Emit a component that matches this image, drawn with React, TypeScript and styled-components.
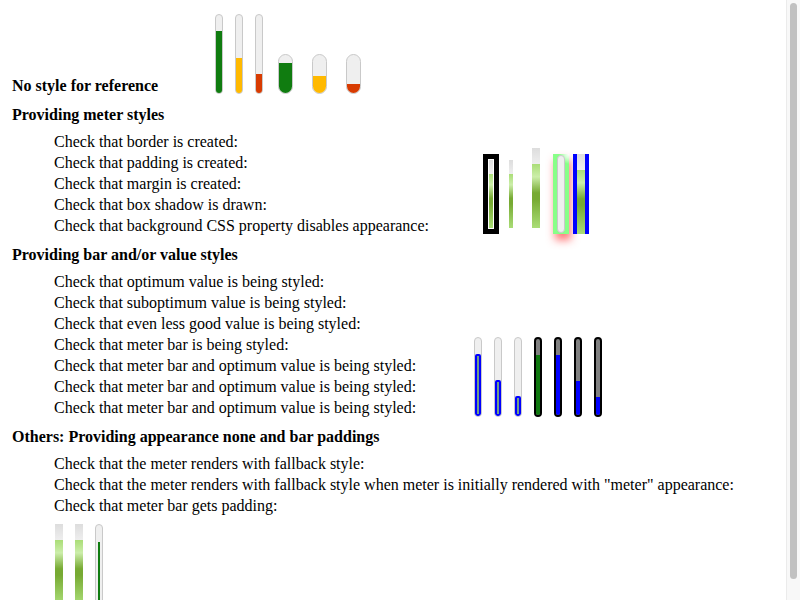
import styled, { createGlobalStyle } from 'styled-components';

const GlobalStyle = createGlobalStyle`
  body {
    margin: 8px;
    background: #fff;
    color: #000;
    font-family: "Liberation Serif", "Times New Roman", serif;
    font-size: 16px;
  }
`;

const Page = styled.div`
  padding: 6px 0 0 4px;
`;

const Section = styled.section`
  margin-bottom: 8px;
`;

const Heading = styled.div<{ $mb?: number }>`
  box-sizing: border-box;
  font-weight: bold;
  height: 21px;
  padding-top: 2px;
  line-height: 19px;
  margin-bottom: ${(p) => p.$mb ?? 6}px;
  white-space: nowrap;
`;

const Row = styled.div<{ $label: number; $indent?: number; $mb?: number }>`
  display: grid;
  grid-template-columns: ${(p) => p.$label}px auto;
  align-items: end;
  margin-left: ${(p) => p.$indent ?? 0}px;
  margin-bottom: ${(p) => p.$mb ?? 0}px;
`;

const Lines = styled.div<{ $indent?: number }>`
  display: flex;
  flex-direction: column;
  margin-left: ${(p) => p.$indent ?? 0}px;
`;

const Line = styled.div`
  box-sizing: border-box;
  height: 21px;
  padding-top: 2px;
  line-height: 19px;
  white-space: nowrap;
`;

const MeterGroup = styled.div<{ $gap: number; $mb?: number; $mt?: number; $ml?: number }>`
  display: flex;
  align-items: flex-end;
  gap: ${(p) => p.$gap}px;
  margin-bottom: ${(p) => p.$mb ?? 0}px;
  margin-top: ${(p) => p.$mt ?? 0}px;
  margin-left: ${(p) => p.$ml ?? 0}px;
`;

/* native looking meter: light capsule with a flat fill */
const Capsule = styled.div<{ $w: number; $h: number; $pad?: string; $ml?: number }>`
  box-sizing: border-box;
  width: ${(p) => p.$w}px;
  height: ${(p) => p.$h}px;
  margin-left: ${(p) => p.$ml ?? 0}px;
  padding: ${(p) => p.$pad ?? '0'};
  background: #efefef;
  border: 1px solid #c9c9c9;
  border-radius: ${(p) => p.$w / 2}px;
  overflow: hidden;
  display: flex;
  flex-direction: column;
  justify-content: flex-end;
  align-items: stretch;
  flex-shrink: 0;
`;

const Fill = styled.div<{ $color: string }>`
  background: ${(p) => p.$color};
`;

/* fallback meter: old gradient bar */
const GradientBar = styled.div<{ $w: number; $h: number; $ml?: number; $mb?: number }>`
  width: ${(p) => p.$w}px;
  height: ${(p) => p.$h}px;
  margin-left: ${(p) => p.$ml ?? 0}px;
  margin-bottom: ${(p) => p.$mb ?? 0}px;
  background: linear-gradient(#ddd, #eee 20%, #ccc 45%, #ccc 55%, #ddd);
  display: flex;
  flex-direction: column;
  justify-content: flex-end;
  flex-shrink: 0;
`;

const GradientValue = styled.div`
  background: linear-gradient(#ad7, #cea 20%, #7a3 45%, #7a3 55%, #ad7);
`;

const BorderBox = styled.div<{ $ml?: number }>`
  border: 5px solid #000;
  padding: 1px;
  margin-left: ${(p) => p.$ml ?? 0}px;
  display: flex;
`;

const PadBox = styled.div<{ $ml?: number }>`
  padding: 6px;
  margin-left: ${(p) => p.$ml ?? 0}px;
  display: flex;
`;

const ShadowBox = styled.div<{ $ml?: number }>`
  box-sizing: border-box;
  width: 16px;
  height: 80px;
  margin-left: ${(p) => p.$ml ?? 0}px;
  padding: 1px 4px;
  background: radial-gradient(circle at 100% 0, #fff 0, #d8ffd8 4px, #8f8 10px);
  box-shadow: 2px 6px 8px rgba(255, 60, 60, 0.7);
  display: flex;
`;

const SideBox = styled.div<{ $ml?: number }>`
  border-left: 4px solid #00f;
  border-right: 4px solid #00f;
  margin-left: ${(p) => p.$ml ?? 0}px;
  display: flex;
`;

const ValueBox = styled.div`
  box-sizing: border-box;
  border: 2px solid #00f;
  border-radius: 2px;
  background: #6e9c8c;
`;

const DarkMeter = styled.div`
  box-sizing: border-box;
  width: 8px;
  height: 80px;
  border: 2px solid #000;
  border-radius: 4px;
  background: #808080;
  overflow: hidden;
  display: flex;
  flex-direction: column;
  justify-content: flex-end;
`;

/* the page overflows the window; the browser's scrollbar is in the shot */
const ScrollTrack = styled.div`
  position: fixed;
  top: 0;
  right: 0;
  bottom: 0;
  width: 14px;
  background: #f8f8f8;
  border-left: 1px solid #ebebeb;
  padding: 3px 3px;
  box-sizing: border-box;
  display: flex;
`;

const ScrollThumb = styled.div`
  width: 8px;
  height: 576px;
  border-radius: 4px;
  background: #c1c1c1;
`;

const GREEN = '#107c10';
const YELLOW = '#ffb900';
const RED = '#d83b01';

const pct = (v: number) => ({ height: `${v * 100}%` });

export default function App() {
  return (
    <>
      <GlobalStyle />
      <Page>
        <Row $label={203} $mb={8}>
          <Heading $mb={0}>No style for reference</Heading>
          <MeterGroup $gap={12} $mb={1}>
            <Capsule $w={8} $h={80}><Fill $color={GREEN} style={pct(0.8)} /></Capsule>
            <Capsule $w={8} $h={80}><Fill $color={YELLOW} style={pct(0.45)} /></Capsule>
            <Capsule $w={8} $h={80}><Fill $color={RED} style={pct(0.25)} /></Capsule>
            <Capsule $w={15} $h={40} $ml={3}><Fill $color={GREEN} style={pct(0.79)} /></Capsule>
            <Capsule $w={15} $h={40} $ml={7}><Fill $color={YELLOW} style={pct(0.45)} /></Capsule>
            <Capsule $w={15} $h={40} $ml={7}><Fill $color={RED} style={pct(0.24)} /></Capsule>
          </MeterGroup>
        </Row>

        <Section>
          <Heading>Providing meter styles</Heading>
          <Row $label={429} $indent={42}>
            <Lines>
              <Line>Check that border is created:</Line>
              <Line>Check that padding is created:</Line>
              <Line>Check that margin is created:</Line>
              <Line>Check that box shadow is drawn:</Line>
              <Line>Check that background CSS property disables appearance:</Line>
            </Lines>
            <MeterGroup $gap={0} $mb={1}>
              <BorderBox>
                <GradientBar $w={4} $h={68}><GradientValue style={pct(0.8)} /></GradientBar>
              </BorderBox>
              <PadBox $ml={4}>
                <GradientBar $w={4} $h={68}><GradientValue style={pct(0.8)} /></GradientBar>
              </PadBox>
              <GradientBar $w={8} $h={80} $ml={13} $mb={6}><GradientValue style={pct(0.8)} /></GradientBar>
              <ShadowBox $ml={13}>
                <Capsule $w={8} $h={78} />
              </ShadowBox>
              <SideBox $ml={4}>
                <GradientBar $w={8} $h={80}><GradientValue style={pct(0.8)} /></GradientBar>
              </SideBox>
            </MeterGroup>
          </Row>
        </Section>

        <Section>
          <Heading>Providing bar and/or value styles</Heading>
          <Row $label={420} $indent={42}>
            <Lines>
              <Line>Check that optimum value is being styled:</Line>
              <Line>Check that suboptimum value is being styled:</Line>
              <Line>Check that even less good value is being styled:</Line>
              <Line>Check that meter bar is being styled:</Line>
              <Line>Check that meter bar and optimum value is being styled:</Line>
              <Line>Check that meter bar and optimum value is being styled:</Line>
              <Line>Check that meter bar and optimum value is being styled:</Line>
            </Lines>
            <MeterGroup $gap={12}>
              <Capsule $w={8} $h={80}><ValueBox style={pct(0.8)} /></Capsule>
              <Capsule $w={8} $h={80}><ValueBox style={pct(0.46)} /></Capsule>
              <Capsule $w={8} $h={80}><ValueBox style={pct(0.26)} /></Capsule>
              <DarkMeter><Fill $color="#0f780f" style={pct(0.79)} /></DarkMeter>
              <DarkMeter><Fill $color="#00f" style={pct(0.79)} /></DarkMeter>
              <DarkMeter><Fill $color="#00f" style={pct(0.45)} /></DarkMeter>
              <DarkMeter><Fill $color="#00f" style={pct(0.24)} /></DarkMeter>
            </MeterGroup>
          </Row>
        </Section>

        <Section>
          <Heading>Others: Providing appearance none and bar paddings</Heading>
          <Lines $indent={42}>
            <Line>Check that the meter renders with fallback style:</Line>
            <Line>Check that the meter renders with fallback style when meter is initially rendered with "meter" appearance:</Line>
            <Line>Check that meter bar gets padding:</Line>
          </Lines>
          <MeterGroup $gap={12} $mt={9} $ml={43}>
            <GradientBar $w={8} $h={80}><GradientValue style={pct(0.8)} /></GradientBar>
            <GradientBar $w={8} $h={80}><GradientValue style={pct(0.8)} /></GradientBar>
            <Capsule $w={8} $h={80} $pad="3px 2px">
              <Fill $color={GREEN} style={pct(0.8)} />
            </Capsule>
          </MeterGroup>
        </Section>
      </Page>
      <ScrollTrack>
        <ScrollThumb />
      </ScrollTrack>
    </>
  );
}
